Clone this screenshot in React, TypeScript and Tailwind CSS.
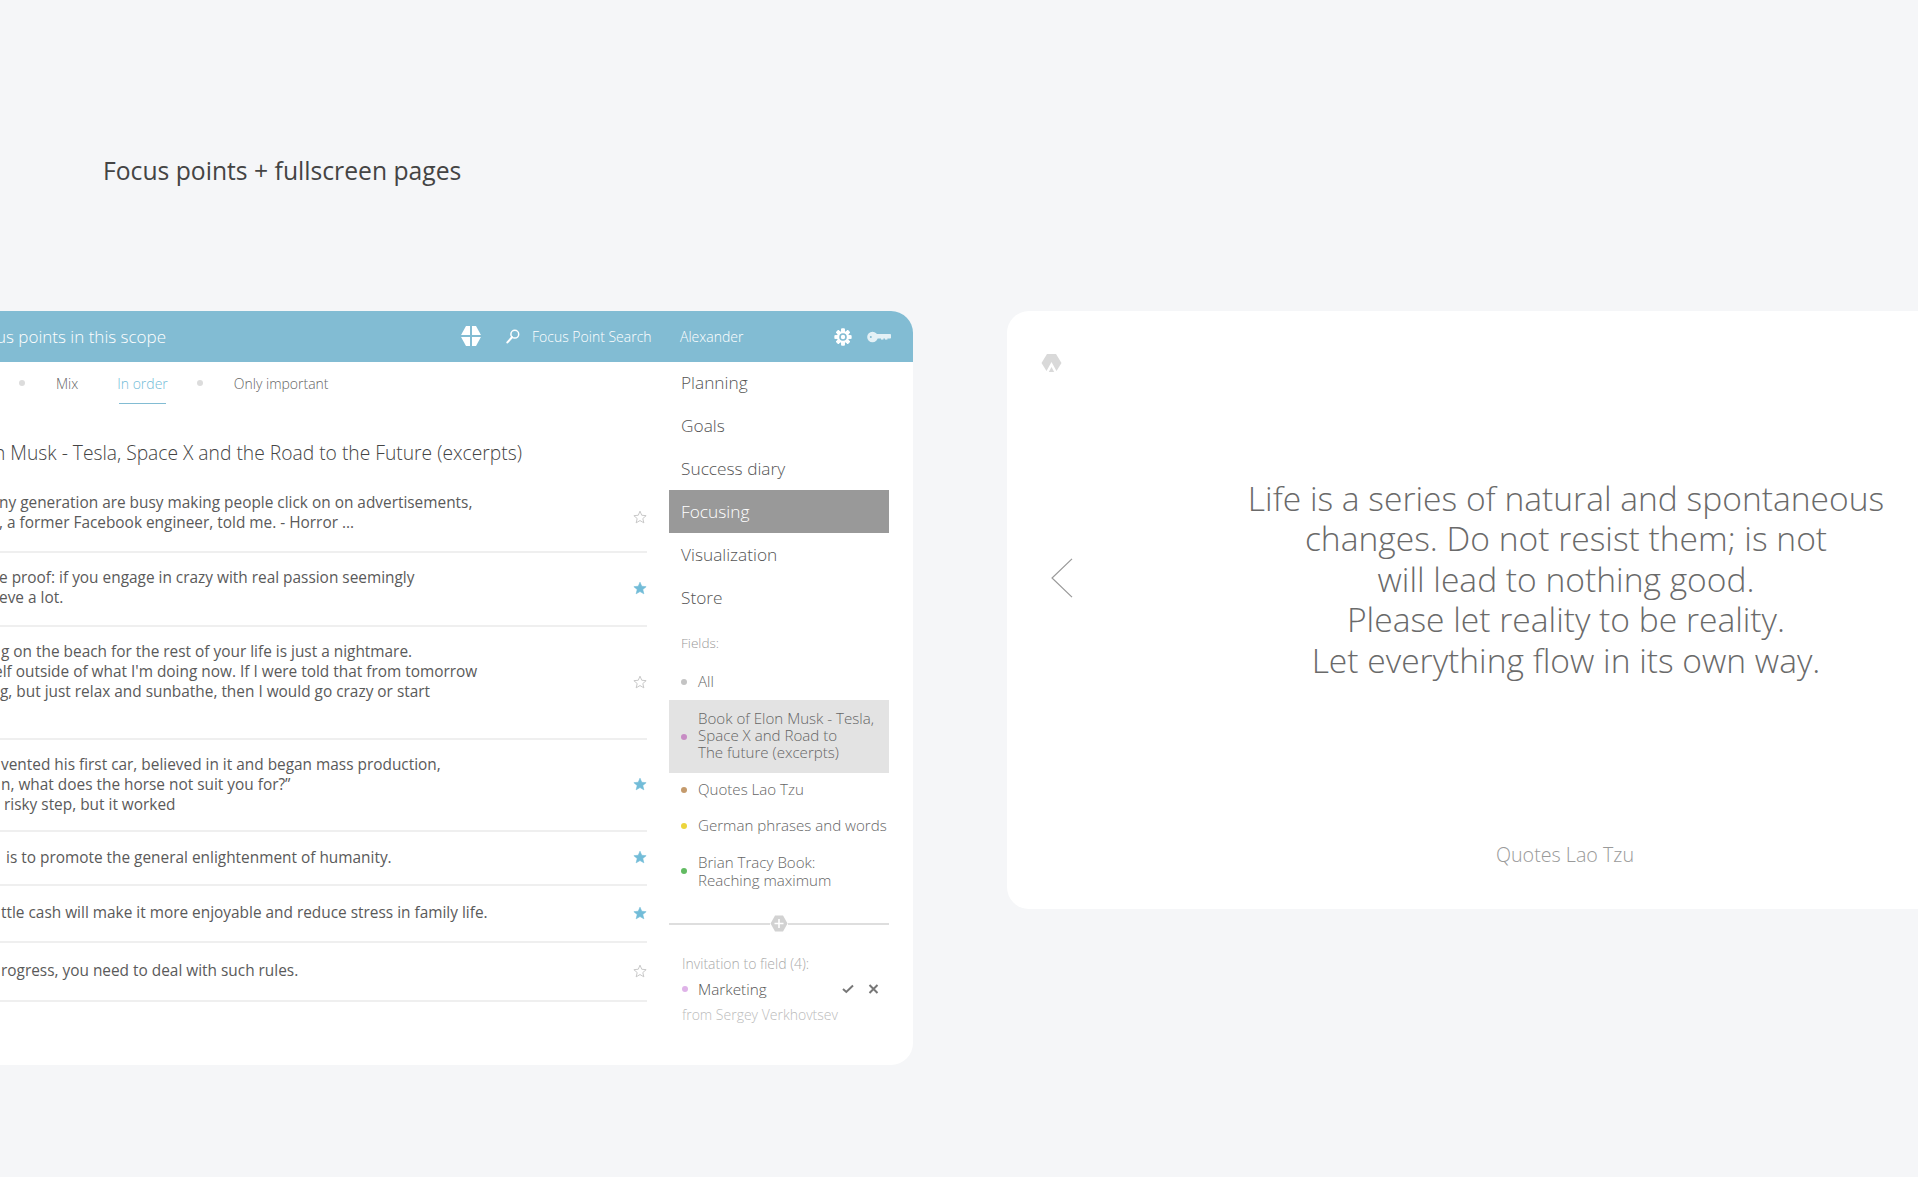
import React from "react";

function Star({ filled }: { filled?: boolean }) {
  return (
    <svg width="14" height="14" viewBox="0 0 24 24" className="shrink-0">
      <polygon
        points="12,2 15,9 22.5,9.7 16.8,14.7 18.6,22 12,18.1 5.4,22 7.2,14.7 1.5,9.7 9,9"
        fill={filled ? "#72bcd8" : "none"}
        stroke={filled ? "#72bcd8" : "#c4c4c4"}
        strokeWidth={filled ? 1 : 1.6}
        strokeLinejoin="round"
      />
    </svg>
  );
}

function HexCross({ size, cls }: { size: number; cls: string }) {
  return (
    <svg width={size} height={size} viewBox="0 0 22 22" className={cls}>
      <path d="M6 1H16L21.5 11L16 21H6L0.5 11Z" fill="currentColor" />
      <rect x="10" y="0" width="2" height="22" fill="#82bcd3" />
      <rect x="0" y="10" width="22" height="2" fill="#82bcd3" />
    </svg>
  );
}

function Gear() {
  const teeth = [0, 45, 90, 135, 180, 225, 270, 315];
  return (
    <svg width="18" height="18" viewBox="0 0 18 18">
      {teeth.map((a) => (
        <rect key={a} x="7.2" y="0.6" width="3.6" height="16.8" rx="0.6" fill="#fff" transform={`rotate(${a} 9 9)`} />
      ))}
      <circle cx="9" cy="9" r="6.1" fill="#fff" />
      <circle cx="9" cy="9" r="3.8" fill="#82bcd3" />
      <circle cx="9" cy="9" r="2.2" fill="#fff" />
    </svg>
  );
}

function Key() {
  return (
    <svg width="24" height="12" viewBox="0 0 24 12">
      <circle cx="5.5" cy="6" r="5.3" fill="#e4f1f6" />
      <rect x="8" y="3" width="16" height="4.6" rx="0.8" fill="#e4f1f6" />
      <rect x="14" y="6" width="2.4" height="2.6" fill="#e4f1f6" />
      <rect x="18" y="6" width="2.4" height="2.6" fill="#e4f1f6" />
      <circle cx="3.8" cy="6" r="1" fill="#82bcd3" />
    </svg>
  );
}

function Search() {
  return (
    <svg width="14" height="15" viewBox="0 0 14 15" fill="none" stroke="#fff">
      <circle cx="8.8" cy="5.2" r="3.9" strokeWidth="1.5" />
      <path d="M6 8.2L1.4 13.4" strokeWidth="2.1" strokeLinecap="round" />
    </svg>
  );
}

function Row({ h, pt, lines, filled }: { h: string; pt: string; lines: { t: string; c: string }[]; filled?: boolean }) {
  return (
    <div className={`flex justify-between border-b-2 border-[#efefef] overflow-hidden ${h}`}>
      <div className={`${pt} text-[15.4px] leading-[20px] text-[#5a5a5a] whitespace-nowrap`}>
        {lines.map((l) => (
          <p key={l.t} className={l.c}>
            {l.t}
          </p>
        ))}
      </div>
      <div className="self-center pb-[2px]">
        <Star filled={filled} />
      </div>
    </div>
  );
}

function Dot({ c }: { c: string }) {
  return <span className={`inline-block w-[6px] h-[6px] rounded-full shrink-0 ${c}`} />;
}

export default function App() {
  return (
    <div className="w-[1918px] h-[1177px] overflow-hidden bg-[#f5f6f8] font-['Open_Sans',sans-serif] flex flex-col">
      <h1 className="pl-[103px] pt-[154px] h-[311px] text-[24.7px] leading-[34px] font-normal text-[#444] shrink-0">
        Focus points + fullscreen pages
      </h1>

      <div className="flex items-start gap-[94px]">
        {/* Left card */}
        <div className="w-[913px] h-[754px] shrink-0 bg-white rounded-r-[22px] overflow-hidden flex flex-col">
          <header className="h-[51px] bg-[#82bcd3] text-white flex items-center shrink-0">
            <span className="w-[460px] text-[17px] font-light whitespace-nowrap">
              <span className="-ml-[4px] inline-block">us points in this scope</span>
            </span>
            <HexCross size={22} cls="text-white -mt-[2px]" />
            <span className="ml-[24px]"><Search /></span>
            <span className="ml-[12px] w-[148px] text-[14px] font-light">Focus Point Search</span>
            <span className="w-[154px] text-[14px] font-light">Alexander</span>
            <Gear />
            <span className="ml-[15px]"><Key /></span>
          </header>

          <div className="flex flex-1">
            <main className="w-[647px] shrink-0 flex flex-col">
              <nav className="h-[46px] flex items-center text-[14px] font-light text-[#666] shrink-0 -mt-[2px]">
                <span className="ml-[19px] flex"><Dot c="bg-[#dcdcdc]" /></span>
                <span className="ml-[31px]">Mix</span>
                <span className="ml-[39px] relative text-[#72bcd8]">
                  In order
                  <span className="absolute left-[2px] right-[2px] -bottom-[10px] h-[1px] bg-[#82bcd3]" />
                </span>
                <span className="ml-[29px] flex"><Dot c="bg-[#dcdcdc]" /></span>
                <span className="ml-[31px]">Only important</span>
              </nav>
              <h2 className="h-[79px] pt-[33px] text-[19.25px] leading-[28px] font-light text-[#444] whitespace-nowrap shrink-0">
                <span className="-ml-[6px] inline-block">n Musk - Tesla, Space X and the Road to the Future (excerpts)</span>
              </h2>

              <Row
                h="h-[68px]"
                pt="pt-[8px]"
                lines={[
                  { t: "ny generation are busy making people click on on advertisements,", c: "-ml-[1px]" },
                  { t: ", a former Facebook engineer, told me. - Horror ...", c: "-ml-[1px]" },
                ]}
              />
              <Row
                h="h-[74px]"
                pt="pt-[15px]"
                filled
                lines={[
                  { t: "e proof: if you engage in crazy with real passion seemingly", c: "-ml-[1px]" },
                  { t: "eve a lot.", c: "-ml-[1px]" },
                ]}
              />
              <Row
                h="h-[113px]"
                pt="pt-[15px]"
                lines={[
                  { t: "g on the beach for the rest of your life is just a nightmare.", c: "ml-[1px]" },
                  { t: "elf outside of what I'm doing now. If I were told that from tomorrow", c: "-ml-[6px]" },
                  { t: "g, but just relax and sunbathe, then I would go crazy or start", c: "ml-0" },
                ]}
              />
              <Row
                h="h-[92px]"
                pt="pt-[15px]"
                filled
                lines={[
                  { t: "vented his first car, believed in it and began mass production,", c: "ml-[1px]" },
                  { t: "n, what does the horse not suit you for?”", c: "ml-[1px]" },
                  { t: "risky step, but it worked", c: "ml-[4px]" },
                ]}
              />
              <Row
                h="h-[54px]"
                pt="pt-[16px]"
                filled
                lines={[{ t: "is to promote the general enlightenment of humanity.", c: "ml-[6px]" }]}
              />
              <Row
                h="h-[57px]"
                pt="pt-[17px]"
                filled
                lines={[{ t: "ttle cash will make it more enjoyable and reduce stress in family life.", c: "ml-[1px]" }]}
              />
              <Row
                h="h-[59px]"
                pt="pt-[18px]"
                lines={[{ t: "rogress, you need to deal with such rules.", c: "ml-[1px]" }]}
              />
            </main>

            <aside className="w-[220px] ml-[22px] shrink-0 flex flex-col">
              <ul className="text-[17.3px] font-light text-[#555] -mt-[1px]">
                <li className="h-[43px] pl-[12px] flex items-center">Planning</li>
                <li className="h-[43px] pl-[12px] flex items-center">Goals</li>
                <li className="h-[43px] pl-[12px] flex items-center">Success diary</li>
                <li className="h-[43px] pl-[12px] flex items-center bg-[#999999] text-white">Focusing</li>
                <li className="h-[43px] pl-[12px] flex items-center">Visualization</li>
                <li className="h-[43px] pl-[12px] flex items-center">Store</li>
              </ul>
              <p className="pl-[12px] mt-[15px] text-[13.6px] leading-[18px] font-light text-[#999]">Fields:</p>
              <div className="text-[15.1px] leading-[17px] font-light text-[#666] mt-[21px]">
                <div className="flex items-center gap-[11px] pl-[12px] h-[17px]">
                  <Dot c="bg-[#c4c4c4]" />
                  All
                </div>
                <div className="flex items-center gap-[11px] pl-[12px] h-[73px] mt-[10px] bg-[#e3e3e3]">
                  <Dot c="bg-[#c78cc4]" />
                  <span className="-mt-[2px]">
                    Book of Elon Musk - Tesla,
                    <br />
                    Space X and Road to
                    <br />
                    The future (excerpts)
                  </span>
                </div>
                <div className="flex items-center gap-[11px] pl-[12px] h-[17px] mt-[8px]">
                  <Dot c="bg-[#c49a6c]" />
                  Quotes Lao Tzu
                </div>
                <div className="flex items-center gap-[11px] pl-[12px] h-[17px] mt-[19px] whitespace-nowrap">
                  <Dot c="bg-[#ecd53c]" />
                  German phrases and words
                </div>
                <div className="flex items-center gap-[11px] pl-[12px] mt-[19px] leading-[18px]">
                  <Dot c="bg-[#62bb62]" />
                  <span>
                    Brian Tracy Book:
                    <br />
                    Reaching maximum
                  </span>
                </div>
              </div>

              <div className="mt-[26px] flex items-center">
                <span className="flex-1 h-[2px] bg-[#dedede]" />
                <svg width="18" height="17" viewBox="0 0 18 17">
                  <path d="M5 0.5H13L17.5 8.5L13 16.5H5L0.5 8.5Z" fill="#d2d2d2" />
                  <path d="M9 4V13M4.5 8.5H13.5" stroke="#fff" strokeWidth="1.6" />
                </svg>
                <span className="flex-1 h-[2px] bg-[#dedede]" />
              </div>

              <p className="pl-[13px] mt-[23px] text-[14px] leading-[18px] font-light text-[#aaa]">Invitation to field (4):</p>
              <div className="flex items-center pl-[13px] mt-[6px] h-[20px] text-[15.3px] font-light text-[#555]">
                <Dot c="bg-[#dfb3e8]" />
                <span className="ml-[10px] w-[144px]">Marketing</span>
                <svg width="12" height="10" viewBox="0 0 12 10" fill="none" stroke="#777" strokeWidth="2">
                  <path d="M1 5L4.3 8L11 1.5" />
                </svg>
                <svg width="11" height="10" viewBox="0 0 11 10" fill="none" stroke="#777" strokeWidth="2" className="ml-[14px]">
                  <path d="M1.5 1L9.5 9M9.5 1L1.5 9" />
                </svg>
              </div>
              <p className="pl-[13px] mt-[7px] text-[14px] leading-[18px] font-light text-[#bbb]">from Sergey Verkhovtsev</p>
            </aside>
          </div>
        </div>

        {/* Right card */}
        <div className="w-[911px] h-[598px] shrink-0 bg-white rounded-l-[22px] flex flex-col">
          <div className="pl-[34px] pt-[42px] h-[169px] shrink-0">
            <svg width="21" height="20" viewBox="0 0 21 20">
              <path d="M6 1H15L20.5 10L15.5 18L10.5 9L5.5 18L0.5 10Z" fill="#d9d9d9" />
              <path d="M10.5 14L13.2 19H7.8Z" fill="#d9d9d9" />
            </svg>
          </div>
          <div className="flex flex-1 items-start">
            <svg width="24" height="40" viewBox="0 0 24 44" preserveAspectRatio="none" fill="none" stroke="#9a9a9a" strokeWidth="1.2" className="ml-[43px] mt-[78px] shrink-0">
              <path d="M22 1L2 22L22 43" />
            </svg>
            <p className="w-[720px] ml-[140px] -mt-[2px] text-center text-[33.6px] leading-[40.4px] font-light text-[#6a6a6a] whitespace-nowrap">
              Life is a series of natural and spontaneous
              <br />
              changes. Do not resist them; is not
              <br />
              will lead to nothing good.
              <br />
              Please let reality to be reality.
              <br />
              Let everything flow in its own way.
            </p>
          </div>
          <p className="w-[720px] ml-[198px] h-[69px] text-center text-[19.7px] font-light text-[#9a9a9a] shrink-0">Quotes Lao Tzu</p>
        </div>
      </div>
    </div>
  );
}
